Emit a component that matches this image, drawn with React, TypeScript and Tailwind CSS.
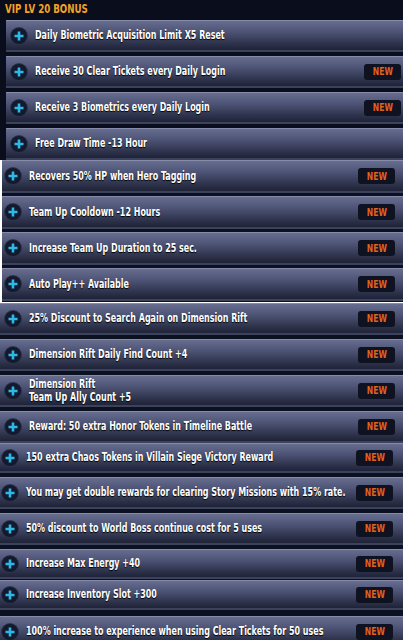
import React from 'react';

type Row = {
  text: string[];
  isNew?: boolean;
  cls: string;
};

const font = { fontFamily: '"DejaVu Sans Condensed", "DejaVu Sans", sans-serif' };

const seg1: Row[] = [
  { text: ['Daily Biometric Acquisition Limit X5 Reset'], cls: 'h-[32px] mt-[4px]' },
  { text: ['Receive 30 Clear Tickets every Daily Login'], isNew: true, cls: 'h-[32px] mt-[4px]' },
  { text: ['Receive 3 Biometrics every Daily Login'], isNew: true, cls: 'h-[32px] mt-[4px]' },
  { text: ['Free Draw Time -13 Hour'], cls: 'h-[32px] mt-[4px]' },
];

const seg2: Row[] = [
  { text: ['Recovers 50% HP when Hero Tagging'], isNew: true, cls: 'h-[33px] mt-0' },
  { text: ['Team Up Cooldown -12 Hours'], isNew: true, cls: 'h-[33px] mt-[3px]' },
  { text: ['Increase Team Up Duration to 25 sec.'], isNew: true, cls: 'h-[33px] mt-[3px]' },
  { text: ['Auto Play++ Available'], isNew: true, cls: 'h-[33px] mt-[3px]' },
];

const seg3: Row[] = [
  { text: ['25% Discount to Search Again on Dimension Rift'], isNew: true, cls: 'h-[32px] mt-[1px]' },
  { text: ['Dimension Rift Daily Find Count +4'], isNew: true, cls: 'h-[32px] mt-[4px]' },
  { text: ['Dimension Rift', 'Team Up Ally Count +5'], isNew: true, cls: 'h-[32px] mt-[4px]' },
  { text: ['Reward: 50 extra Honor Tokens in Timeline Battle'], isNew: true, cls: 'h-[32px] mt-[4px]' },
];

const seg4: Row[] = [
  { text: ['150 extra Chaos Tokens in Villain Siege Victory Reward'], isNew: true, cls: 'h-[30px] mt-0' },
  { text: ['You may get double rewards for clearing Story Missions with 15% rate.'], isNew: true, cls: 'h-[32px] mt-[4px]' },
  { text: ['50% discount to World Boss continue cost for 5 uses'], isNew: true, cls: 'h-[32px] mt-[4px]' },
  { text: ['Increase Max Energy +40'], isNew: true, cls: 'h-[30px] mt-[4px]' },
  { text: ['Increase Inventory Slot +300'], isNew: true, cls: 'h-[30px] mt-[1px]' },
  { text: ['100% increase to experience when using Clear Tickets for 50 uses'], isNew: true, cls: 'h-[32px] mt-[6px]' },
];

function PlusIcon() {
  return (
    <span className="flex h-[16px] w-[16px] shrink-0 items-center justify-center rounded-full bg-[#141a2c] shadow-[0_0_0_1px_#2c3350]">
      <svg width="10" height="10" viewBox="0 0 10 10">
        <path d="M5 0.5v9M0.5 5h9" stroke="#2cb8e8" strokeWidth="2.6" />
      </svg>
    </span>
  );
}

function BonusRow({ row, padL, gapText, badgeR }: { row: Row; padL: string; gapText: string; badgeR: string }) {
  return (
    <div
      className={`${row.cls} flex items-center border-t border-[#858ba9] border-b-2 border-b-[#3d425c] bg-[linear-gradient(180deg,#676d8f_0%,#4f5577_35%,#2c3149_80%,#1f2337_100%)] ${padL}`}
    >
      <PlusIcon />
      <div className={`min-w-0 flex-1 ${gapText} text-[11.5px] font-bold leading-[13px] text-white [text-shadow:0_1px_1px_#000]`} style={font}>
        {row.text.map((t) => (
          <div key={t} className="origin-left scale-x-[0.77] whitespace-nowrap">
            {t}
          </div>
        ))}
      </div>
      {row.isNew && (
        <span
          className={`flex h-[16px] w-[37px] shrink-0 items-center justify-center rounded-[3px] bg-[#0f1321] text-[10px] font-bold text-[#e2621c] ${badgeR}`}
          style={font}
        >
          <span className="scale-x-[0.85]">NEW</span>
        </span>
      )}
    </div>
  );
}

export default function App() {
  return (
    <div className="h-[640px] w-[403px] overflow-hidden bg-white">
      <div className="bg-[#0a0e1c] pl-[6px]">
        <div className="h-[16px] text-[13px] font-bold leading-[18px] text-[#f4a326]" style={font}>
          <div className="-ml-[1px] origin-left scale-x-[0.74] whitespace-nowrap">VIP LV 20 BONUS</div>
        </div>
        {seg1.map((r) => (
          <BonusRow key={r.text.join()} row={r} padL="pl-[5px]" gapText="ml-[8px]" badgeR="mr-[2px]" />
        ))}
      </div>

      <div className="bg-white pl-[2px]">
        <div className="bg-[#0c1122] pb-[1px]">
          {seg2.map((r) => (
            <BonusRow key={r.text.join()} row={r} padL="pl-[3px]" gapText="ml-[8px]" badgeR="mr-[8px]" />
          ))}
        </div>
      </div>

      <div className="bg-[#0c1122]">
        {seg3.map((r) => (
          <BonusRow key={r.text.join()} row={r} padL="pl-[5px]" gapText="ml-[8px]" badgeR="mr-[8px]" />
        ))}
      </div>

      <div className="bg-[#0c1122]">
        {seg4.map((r) => (
          <BonusRow key={r.text.join()} row={r} padL="pl-[2px]" gapText="ml-[8px]" badgeR="mr-[10px]" />
        ))}
      </div>
    </div>
  );
}
